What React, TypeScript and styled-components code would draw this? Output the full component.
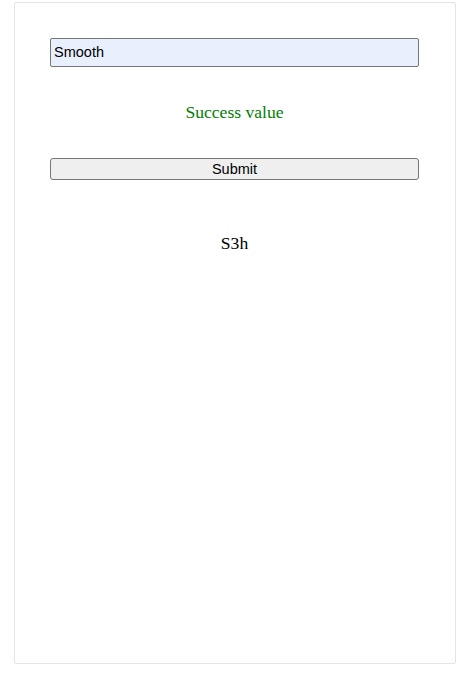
import React from "react";
import styled, { createGlobalStyle } from "styled-components";

const Global = createGlobalStyle`
  html, body { margin: 0; padding: 0; background: #ffffff; }
  body { font-family: "Liberation Serif", "Times New Roman", serif; }
`;

const Page = styled.div`
  padding: 2px 13px 0 14px;
`;

const Card = styled.div`
  box-sizing: border-box;
  width: 442px;
  height: 662px;
  border: 1px solid #e4e4e4;
  border-radius: 2px;
  background: #ffffff;
  padding: 35px 36px 0 35px;
  display: flex;
  flex-direction: column;
  align-items: stretch;
`;

const TextInput = styled.input`
  box-sizing: border-box;
  height: 29px;
  width: 100%;
  margin: 0;
  padding: 0 3px 2px;
  border: 1px solid #767676;
  border-radius: 2px;
  background: #e8f0fe;
  color: #000000;
  font-family: "Liberation Sans", Arial, sans-serif;
  font-size: 14.5px;
  outline: none;
`;

const Message = styled.p<{ $tone?: "success" | "plain" }>`
  margin: ${(p) => (p.$tone === "success" ? "35px 0 0" : "53px 0 0")};
  text-align: center;
  font-family: "Liberation Serif", "Times New Roman", serif;
  font-size: 17.6px;
  line-height: 20px;
  color: ${(p) => (p.$tone === "success" ? "#008000" : "#000000")};
`;

const SubmitButton = styled.button`
  box-sizing: border-box;
  height: 22px;
  width: 100%;
  margin: 36px 0 0;
  padding: 0;
  border: 1px solid #767676;
  border-radius: 3px;
  background: #efefef;
  color: #000000;
  font-family: "Liberation Sans", Arial, sans-serif;
  font-size: 14.5px;
  cursor: pointer;
`;

export default function App() {
  return (
    <Page>
      <Global />
      <Card>
        <TextInput defaultValue="Smooth" />
        <Message $tone="success">Success value</Message>
        <SubmitButton type="button">Submit</SubmitButton>
        <Message $tone="plain">S3h</Message>
      </Card>
    </Page>
  );
}
